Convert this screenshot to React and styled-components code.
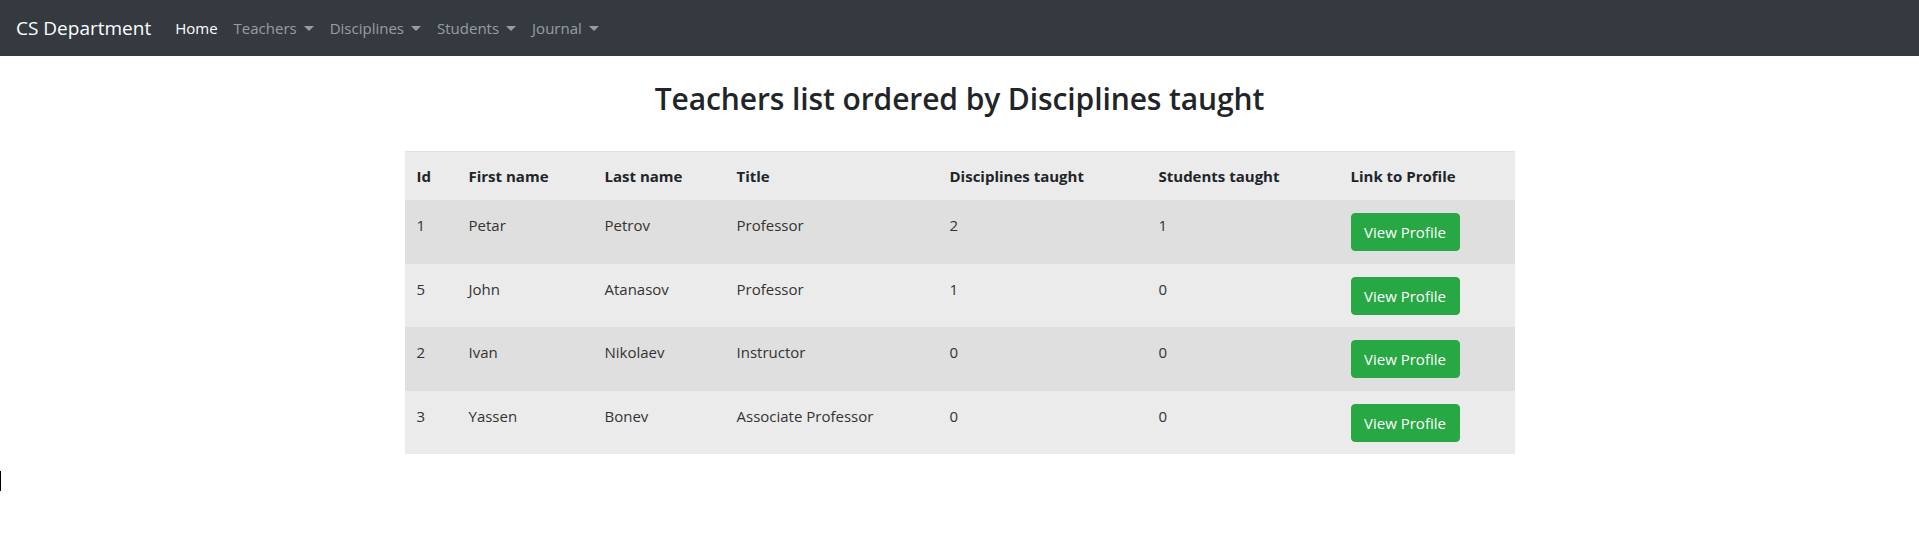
import React from 'react';
import styled, { createGlobalStyle } from 'styled-components';

const GlobalStyle = createGlobalStyle`
    body {
        margin: 0;
        font-family: 'Open Sans', 'Noto Sans', sans-serif;
        font-size: 16px;
        line-height: 1.5;
        color: #212529;
        background: #fff;
    }
`;

const Navbar = styled.nav`
    display: flex;
    align-items: center;
    height: 56px;
    padding: 0 16px;
    background-color: #343a40;
    box-sizing: border-box;
`;

const Brand = styled.a`
    font-size: 19px;
    line-height: 30px;
    color: #fff;
    margin-right: 16px;
    text-decoration: none;
`;

const NavLinks = styled.ul`
    display: flex;
    list-style: none;
    margin: 0;
    padding: 0;
`;

const NavLink = styled.li`
    padding: 8px 8px;
    font-size: 15px;
    white-space: nowrap;
    color: ${({ $active }) => ($active ? '#fff' : 'rgba(255, 255, 255, .5)')};

    ${({ $dropdown }) => $dropdown && `
        &:after {
            content: '';
            display: inline-block;
            margin-left: 7px;
            vertical-align: .2em;
            border-top: 5px solid;
            border-right: 5px solid transparent;
            border-left: 5px solid transparent;
        }
    `}
`;

const Container = styled.main`
    width: 1110px;
    margin: 0 auto;
`;

const Heading = styled.h2`
    margin: 25px 0 34px;
    text-align: center;
    font-size: 30px;
    font-weight: 600;
    line-height: 1.2;
    letter-spacing: -0.1px;
`;

const Table = styled.table`
    width: 100%;
    border-collapse: collapse;
    font-size: 15px;
    line-height: 24px;
    background-color: #ebebeb;
    border-top: 1px solid #e3e3e3;
`;

const Th = styled.th`
    text-align: left;
    vertical-align: top;
    padding: 12px;
    font-weight: 700;
    width: ${({ $w }) => $w}px;
    box-sizing: border-box;
`;

const Row = styled.tr`
    background-color: ${({ $odd }) => ($odd ? '#dfdfdf' : '#ebebeb')};
`;

const Td = styled.td`
    vertical-align: top;
    padding: 13px 12px 12.5px;
    color: #333;
`;

const ProfileButton = styled.button`
    font-family: inherit;
    font-size: 15px;
    line-height: 24px;
    padding: 6px 12px;
    width: 109px;
    height: 38px;
    color: #fff;
    background-color: #28a745;
    border: 1px solid #28a745;
    border-radius: 4px;
    cursor: pointer;
    white-space: nowrap;
`;

const Caret = styled.div`
    width: 1px;
    height: 20px;
    margin-top: 17px;
    background: #000;
`;

const columns = [
    { label: 'Id', width: 52 },
    { label: 'First name', width: 136 },
    { label: 'Last name', width: 132 },
    { label: 'Title', width: 213 },
    { label: 'Disciplines taught', width: 209 },
    { label: 'Students taught', width: 192 },
    { label: 'Link to Profile', width: 176 },
];

const teachers = [
    { id: 1, first: 'Petar', last: 'Petrov', title: 'Professor', disciplines: 2, students: 1 },
    { id: 5, first: 'John', last: 'Atanasov', title: 'Professor', disciplines: 1, students: 0 },
    { id: 2, first: 'Ivan', last: 'Nikolaev', title: 'Instructor', disciplines: 0, students: 0 },
    { id: 3, first: 'Yassen', last: 'Bonev', title: 'Associate Professor', disciplines: 0, students: 0 },
];

const App = () => {
    return (
        <>
            <GlobalStyle />
            <Navbar>
                <Brand>CS Department</Brand>
                <NavLinks>
                    <NavLink $active>Home</NavLink>
                    <NavLink $dropdown>Teachers</NavLink>
                    <NavLink $dropdown>Disciplines</NavLink>
                    <NavLink $dropdown>Students</NavLink>
                    <NavLink $dropdown>Journal</NavLink>
                </NavLinks>
            </Navbar>
            <Container>
                <Heading>Teachers list ordered by Disciplines taught</Heading>
                <Table>
                    <thead>
                        <tr>
                            {columns.map(c => (
                                <Th key={c.label} $w={c.width}>{c.label}</Th>
                            ))}
                        </tr>
                    </thead>
                    <tbody>
                        {teachers.map((t, i) => (
                            <Row key={t.id} $odd={i % 2 === 0}>
                                <Td>{t.id}</Td>
                                <Td>{t.first}</Td>
                                <Td>{t.last}</Td>
                                <Td>{t.title}</Td>
                                <Td>{t.disciplines}</Td>
                                <Td>{t.students}</Td>
                                <Td><ProfileButton>View Profile</ProfileButton></Td>
                            </Row>
                        ))}
                    </tbody>
                </Table>
            </Container>
            <Caret />
        </>
    );
}

export default App;
